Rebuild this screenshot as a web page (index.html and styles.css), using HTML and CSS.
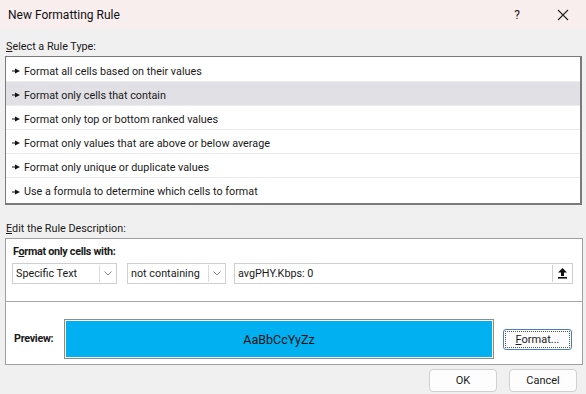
FILE: index.html
```html
<!DOCTYPE html>
<html lang="en">
<head>
<meta charset="UTF-8">
<title>New Formatting Rule</title>
<link rel="stylesheet" href="styles.css">
</head>
<body>

<div class="titlebar">
    <span class="title">New Formatting Rule</span>
    <span class="help">?</span>
    <span class="close">
        <svg width="12" height="12" viewBox="0 0 12 12"><path d="M1 1 L11 11 M11 1 L1 11" stroke="#222" stroke-width="1.1" fill="none"/></svg>
    </span>
</div>

<div class="dialog">
    <div class="label"><u>S</u>elect a Rule Type:</div>
    <ul class="rules">
        <li><svg class="arrow" width="8" height="6" viewBox="0 0 8 6"><path d="M0 2.4 H3 V0.5 L8 3 L3 5.5 V3.6 H0 Z" fill="#111"/></svg>Format all cells based on their values</li>
        <li class="selected"><svg class="arrow" width="8" height="6" viewBox="0 0 8 6"><path d="M0 2.4 H3 V0.5 L8 3 L3 5.5 V3.6 H0 Z" fill="#111"/></svg>Format only cells that contain</li>
        <li><svg class="arrow" width="8" height="6" viewBox="0 0 8 6"><path d="M0 2.4 H3 V0.5 L8 3 L3 5.5 V3.6 H0 Z" fill="#111"/></svg>Format only top or bottom ranked values</li>
        <li><svg class="arrow" width="8" height="6" viewBox="0 0 8 6"><path d="M0 2.4 H3 V0.5 L8 3 L3 5.5 V3.6 H0 Z" fill="#111"/></svg>Format only values that are above or below average</li>
        <li><svg class="arrow" width="8" height="6" viewBox="0 0 8 6"><path d="M0 2.4 H3 V0.5 L8 3 L3 5.5 V3.6 H0 Z" fill="#111"/></svg>Format only unique or duplicate values</li>
        <li><svg class="arrow" width="8" height="6" viewBox="0 0 8 6"><path d="M0 2.4 H3 V0.5 L8 3 L3 5.5 V3.6 H0 Z" fill="#111"/></svg>Use a formula to determine which cells to format</li>
    </ul>

    <div class="label label-edit"><u>E</u>dit the Rule Description:</div>
    <div class="desc">
        <div class="desc-top">
            <div class="bold">F<u>o</u>rmat only cells with:</div>
            <div class="fields">
                <div class="combo combo-type">
                    <span class="combo-text">Specific Text</span>
                    <span class="combo-btn"><svg width="8" height="5" viewBox="0 0 8 5"><path d="M0.5 0.5 L4 4 L7.5 0.5" stroke="#888" fill="none"/></svg></span>
                </div>
                <div class="combo combo-op">
                    <span class="combo-text">not containing</span>
                    <span class="combo-btn"><svg width="8" height="5" viewBox="0 0 8 5"><path d="M0.5 0.5 L4 4 L7.5 0.5" stroke="#888" fill="none"/></svg></span>
                </div>
                <div class="input">
                    <span class="input-text">avgPHY.Kbps: 0</span>
                    <span class="pick-btn"><svg width="9" height="11" viewBox="0 0 9 11"><path d="M4.5 0 L9 4.5 H6 V8 H3 V4.5 H0 Z" fill="#111"/><rect x="0" y="9" width="9" height="1.6" fill="#111"/></svg></span>
                </div>
            </div>
        </div>
        <div class="desc-bottom">
            <span class="bold">Preview:</span>
            <div class="preview"><div class="preview-fill">AaBbCcYyZz</div></div>
            <button class="btn btn-format"><u>F</u>ormat...</button>
        </div>
    </div>

    <div class="actions">
        <button class="btn btn-ok">OK</button>
        <button class="btn btn-cancel">Cancel</button>
    </div>
</div>

</body>
</html>
```

FILE: styles.css
```css
body {
    margin: 0;
    background: #f0f0f0;
    font-family: Roboto, "Noto Sans", sans-serif;
    font-size: 10.8px;
    color: #1a1a1a;
    width: 586px;
    height: 394px;
    overflow: hidden;
}
.titlebar {
    height: 29px;
    background: #f8eeee;
    display: flex;
    align-items: center;
}
.title {
    flex: 1;
    padding-left: 8px;
    font-size: 12px;
    color: #111;
}
.help {
    width: 46px;
    text-align: center;
    font-size: 12px;
    margin-left: 2px;
}
.close {
    width: 46px;
    display: flex;
    justify-content: center;
}
.dialog {
    padding: 8px 3px 0 5px;
}
.label {
    height: 19px;
    line-height: 19px;
    padding-left: 1px;
}
.rules {
    list-style: none;
    margin: 0;
    padding: 1px 0;
    border: 1px solid #7a7a7a;
    border-right-width: 2px;
    border-bottom-width: 2px;
    background: #fff;
    width: 574px;
}
.rules li {
    box-sizing: border-box;
    height: 24px;
    padding-top: 3px;
    border-bottom: 1px solid #ececec;
    padding-left: 6px;
    display: flex;
    align-items: center;
}
.rules li:last-child {
    border-bottom: none;
}
.rules li.selected {
    background: #e0e0e5;
}
.arrow {
    margin-right: 4px;
}
.label-edit {
    margin-top: 14px;
}
.desc {
    border: 1px solid #a0a0a0;
    background: #fff;
    width: 576px;
}
.desc-top {
    padding: 4px 9px 0 6px;
    height: 58px;
    border-bottom: 1px solid #a8a8a8;
}
.bold {
    font-weight: bold;
    letter-spacing: -0.3px;
    height: 20px;
    line-height: 18px;
    padding-left: 1px;
}
.fields {
    display: flex;
    gap: 10px;
}
.combo, .input {
    height: 19px;
    border: 1px solid #cfcfcf;
    display: flex;
    align-items: center;
}
.combo-type {
    width: 103px;
}
.combo-op {
    width: 97px;
}
.input {
    flex: 1;
    margin-left: -2px;
}
.combo-text, .input-text {
    flex: 1;
    padding-left: 3px;
    white-space: nowrap;
}
.combo-btn {
    width: 15px;
    height: 17px;
    margin-right: 1px;
    border: 1px solid #dcdcdc;
    border-width: 0 0 0 1px;
    display: flex;
    align-items: center;
    justify-content: center;
}
.pick-btn {
    width: 19px;
    height: 17px;
    border: 1px solid #cfcfcf;
    border-width: 0 0 0 1px;
    display: flex;
    align-items: center;
    justify-content: center;
}
.desc-bottom {
    height: 50px;
    padding-top: 12px;
    display: flex;
    align-items: center;
    padding-left: 7px;
}
.desc-bottom .bold {
    height: auto;
    width: 50px;
}
.preview {
    width: 426px;
    height: 36px;
    border: 1px solid #8c8c8c;
    padding: 1px;
    background: #fff;
}
.preview-fill {
    height: 100%;
    background: #00b0f0;
    display: flex;
    align-items: center;
    justify-content: center;
    font-size: 12.5px;
    color: #111;
}
.btn {
    font-family: inherit;
    font-size: 11px;
    color: #1a1a1a;
    background: #fdfdfd;
    border: 1px solid #d0d0d0;
    border-radius: 4px;
    padding: 0;
}
.btn-format {
    width: 69px;
    height: 21px;
    margin-left: 9px;
    border: 1px solid #4a7fbf;
    border-radius: 3px;
    outline: 1px dotted #555;
    outline-offset: -3px;
}
.actions {
    display: flex;
    justify-content: flex-end;
    gap: 12px;
    margin-top: 4px;
    padding-right: 6px;
}
.btn-ok, .btn-cancel {
    width: 68px;
    height: 23px;
}
```
